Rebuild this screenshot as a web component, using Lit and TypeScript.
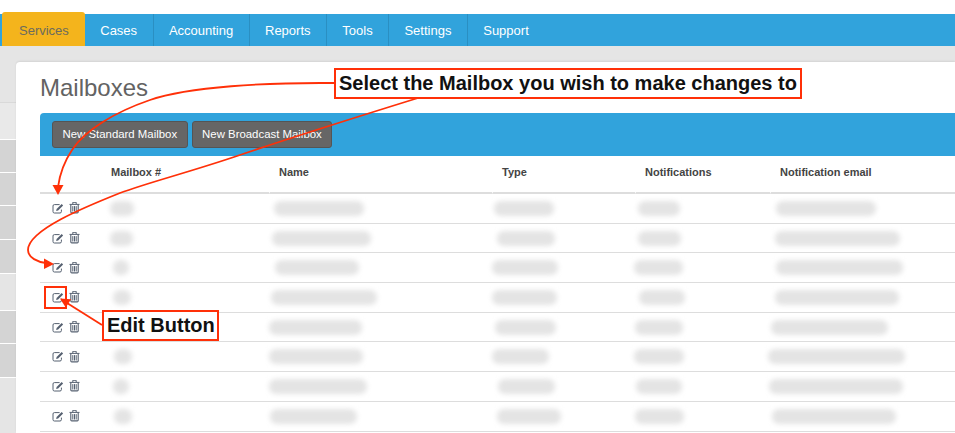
import { html, css, svg, LitElement } from 'lit';
import { customElement } from 'lit/decorators.js';

const TABS = ['Services', 'Cases', 'Accounting', 'Reports', 'Tools', 'Settings', 'Support'];
const COLUMNS = ['', 'Mailbox #', 'Name', 'Type', 'Notifications', 'Notification email'];
// left edge of each table column in page pixels
const COLUMN_X = [40, 101, 269, 492, 635, 770];

// blurred-out cell values: [start, end] in page pixels, one entry per column
const ROWS: number[][][] = [
  [[108, 135], [272, 365], [492, 555], [636, 681], [774, 877]],
  [[108, 134], [270, 372], [495, 556], [636, 682], [773, 901]],
  [[111, 130], [273, 360], [490, 559], [632, 684], [774, 904]],
  [[111, 132], [269, 378], [490, 558], [637, 686], [773, 900]],
  [[110, 130], [267, 363], [493, 557], [633, 684], [769, 889]],
  [[112, 133], [267, 364], [490, 550], [632, 685], [766, 906]],
  [[111, 130], [267, 368], [496, 556], [634, 683], [767, 904]],
  [[112, 133], [268, 358], [495, 562], [633, 685], [770, 897]],
];

const editIcon = html`<svg class="edit" width="12" height="11" viewBox="0 0 12 11">
  <path d="M7.6 1.6H2.4A1.4 1.4 0 0 0 1 3v5.6A1.4 1.4 0 0 0 2.4 10H8a1.4 1.4 0 0 0 1.4-1.4V6.6" fill="none" stroke="currentColor" stroke-width="1"/>
  <path d="M4.6 6 9.7 1l1.4 1.4-5 5.1-2 .4z" fill="currentColor"/>
</svg>`;

const trashIcon = html`<svg class="trash" width="11" height="12" viewBox="0 0 11 12">
  <path d="M.5 2.4h10M3.8 2.1V.3h3.4v1.8" fill="none" stroke="currentColor" stroke-width="1"/>
  <path d="M1.8 2.7v7.3c0 .6.3.9.9.9h5.6c.6 0 .9-.3.9-.9V2.7" fill="none" stroke="currentColor" stroke-width="1.1"/>
  <path d="M3.8 4.1v5.4M5.5 4.1v5.4M7.2 4.1v5.4" fill="none" stroke="currentColor" stroke-width="1"/>
</svg>`;

const annotations = svg`
  <path d="M334 83 L320 83 C270 83 190 86 150 100 C115 112 85 130 72 150 C64 162 60 172 58 187" />
  <polygon points="58,195 52.5,185 63.5,185" />
  <path d="M418 98 C360 116 290 138 240 155 C190 172 150 182 120 193 C85 207 28 230 28 250 C28 258 38 262 46 263" />
  <polygon points="54,264 44,258.5 44,269" />
  <path d="M102 325 L67 303" />
  <polygon points="60,298.5 65.7,307.6 71.1,299.2" />
`;

@customElement('app-root')
export class AppRoot extends LitElement {
  static styles = css`
    :host {
      display: block;
      height: 433px;
      overflow: hidden;
      font-family: 'Liberation Sans', Arial, sans-serif;
      background: #fff;
    }

    .page {
      position: relative;
      height: 433px;
      padding-top: 14px;
      box-sizing: border-box;
      overflow: hidden;
    }

    .nav {
      display: flex;
      height: 32px;
      padding-left: 2px;
      background: #31a3dc;
    }

    .tab {
      display: flex;
      align-items: center;
      padding: 0 15.4px;
      font-size: 13px;
      color: #fff;
      border-right: 1px solid #2a8fc2;
    }

    .tab:last-child {
      border-right: none;
    }

    .tab.active {
      height: 34px;
      margin-top: -2px;
      padding: 2px 16px 0 17px;
      box-sizing: border-box;
      background: #f4b41c;
      color: #6b6b5e;
      border-right: none;
      border-radius: 3px 3px 0 0;
    }

    .main {
      display: flex;
      height: 387px;
      background: #e5e5e5;
    }

    .sidebar {
      flex: none;
      width: 16px;
      padding-top: 56px;
      box-sizing: border-box;
    }

    .side-row {
      box-sizing: border-box;
      border-top: 1px solid #d9d9d9;
      background: #e9e9e9;
    }

    .side-row.dark {
      background: #d4d4d4;
      border-top: 1px solid #fff;
    }

    .side-row.plain {
      background: #e5e5e5;
      border-top: 1px solid #fff;
    }

    .card {
      flex: 1;
      margin-top: 16px;
      padding: 6px 0 0 24px;
      background: #fff;
      border-radius: 4px 0 0 0;
      box-shadow: 0 -1px 2px rgba(0, 0, 0, 0.08);
      min-width: 0;
    }

    h1 {
      margin: 0;
      height: 45px;
      font-size: 24px;
      font-weight: 400;
      line-height: 40px;
      color: #636363;
    }

    .toolbar {
      display: flex;
      gap: 4px;
      height: 43px;
      padding: 8px 12px;
      box-sizing: border-box;
      background: #31a3dc;
      border-radius: 4px 0 0 0;
    }

    .btn {
      height: 27px;
      padding: 0 9.5px;
      box-sizing: border-box;
      font: 11.4px/25px 'Liberation Sans', Arial, sans-serif;
      color: #fff;
      background: #666;
      border: 1px solid #555;
      border-radius: 3px;
    }

    .row {
      display: grid;
      grid-template-columns: 61px 168px 223px 143px 135px 1fr;
      height: 29.7px;
      box-sizing: border-box;
      border-bottom: 1px solid #ddd;
    }

    .row.head {
      height: 38px;
      border-bottom: none;
    }

    .th {
      padding: 10px 9px 0;
      font-size: 11px;
      font-weight: 700;
      color: #444;
      border-left: 1px solid #fff;
      border-bottom: 2px solid #ddd;
      box-sizing: border-box;
    }

    .th:first-child {
      border-left: none;
    }

    .cell {
      display: flex;
      align-items: center;
      min-width: 0;
    }

    .actions {
      gap: 5px;
      padding-left: 12px;
      color: #556070;
    }

    .smear {
      flex: none;
      height: 15px;
      background: #e4e4e4;
      border-radius: 7px;
      filter: blur(2.5px);
    }

    .overlay {
      position: absolute;
      inset: 0;
      pointer-events: none;
    }

    .overlay path {
      fill: none;
      stroke: #ff3008;
      stroke-width: 1.8;
    }

    .overlay polygon {
      fill: #ff3008;
    }

    .callout {
      position: absolute;
      box-sizing: border-box;
      padding-left: 3px;
      font-size: 20px;
      font-weight: 700;
      color: #111;
      white-space: nowrap;
      background: #fff;
      border: 2px solid #ff3008;
    }

    .select-note {
      left: 334px;
      top: 68px;
      width: 468px;
      height: 31px;
      line-height: 27px;
    }

    .edit-note {
      left: 102px;
      top: 310px;
      width: 117px;
      height: 31px;
      line-height: 27px;
    }

    .edit-box {
      position: absolute;
      left: 44px;
      top: 286px;
      width: 23px;
      height: 23px;
      box-sizing: border-box;
      border: 2px solid #ff3008;
    }
  `;

  private sideRows() {
    const rows: [number, string][] = [
      [37, ''],
      [33, 'dark'],
      [33, 'dark'],
      [34, 'dark'],
      [34, 'dark'],
      [37, 'plain'],
      [33, 'dark'],
      [34, 'dark'],
      [56, 'plain'],
    ];
    return rows.map(([h, cls]) => html`<div class="side-row ${cls}" style="height:${h}px"></div>`);
  }

  private renderRow(row: number[][]) {
    return html`<div class="row">
      <div class="cell actions">${editIcon}${trashIcon}</div>
      ${row.map(
        ([start, end], i) => html`<div class="cell">
          <div
            class="smear"
            style="margin-left:${start + 1.5 - COLUMN_X[i + 1]}px;width:${end - start - 3}px"
          ></div>
        </div>`
      )}
    </div>`;
  }

  render() {
    return html`
      <div class="page">
        <nav class="nav">
          ${TABS.map((t, i) => html`<div class="tab ${i === 0 ? 'active' : ''}">${t}</div>`)}
        </nav>
        <div class="main">
          <div class="sidebar">${this.sideRows()}</div>
          <div class="card">
            <h1>Mailboxes</h1>
            <div class="toolbar">
              <div class="btn">New Standard Mailbox</div>
              <div class="btn">New Broadcast Mailbox</div>
            </div>
            <div class="row head">
              ${COLUMNS.map((c) => html`<div class="th">${c}</div>`)}
            </div>
            ${ROWS.map((r) => this.renderRow(r))}
          </div>
        </div>
        <svg class="overlay" width="955" height="433" viewBox="0 0 955 433">${annotations}</svg>
        <div class="callout select-note">Select the Mailbox you wish to make changes to</div>
        <div class="callout edit-note">Edit Button</div>
        <div class="edit-box"></div>
      </div>
    `;
  }
}

declare global {
  interface HTMLElementTagNameMap {
    'app-root': AppRoot;
  }
}
